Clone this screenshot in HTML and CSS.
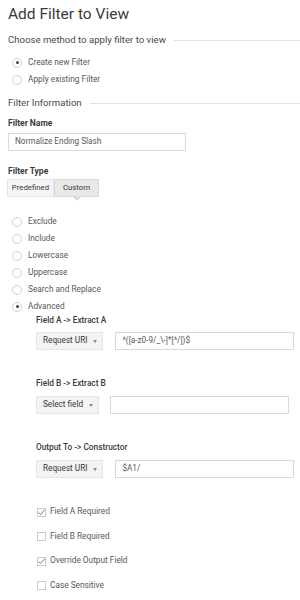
FILE: index.html
```html
<!doctype html>
<html lang="en">
<head>
	<meta charset="utf-8">
	<meta name="viewport" content="width=device-width, initial-scale=1">
	<title>Add Filter to View</title>
	<link rel="stylesheet" href="styles.css">
</head>
<body>

	<main class="page">

		<h1 class="title">Add Filter to View</h1>

		<div class="section-head section-head-first">Choose method to apply filter to view</div>

		<div class="radios radios-method">
			<label class="radio"><span class="radio-dot is-on"></span>Create new Filter</label>
			<label class="radio"><span class="radio-dot"></span>Apply existing Filter</label>
		</div>

		<div class="section-head">Filter Information</div>

		<div class="field-label field-label-name">Filter Name</div>
		<div class="text-input text-input-name">Normalize Ending Slash</div>

		<div class="field-label field-label-type">Filter Type</div>
		<div class="tabs">
			<span class="tab tab-first">Predefined</span>
			<span class="tab tab-active">Custom</span>
		</div>

		<div class="radios radios-type">
			<label class="radio"><span class="radio-dot"></span>Exclude</label>
			<label class="radio"><span class="radio-dot"></span>Include</label>
			<label class="radio"><span class="radio-dot"></span>Lowercase</label>
			<label class="radio"><span class="radio-dot"></span>Uppercase</label>
			<label class="radio"><span class="radio-dot"></span>Search and Replace</label>
			<label class="radio"><span class="radio-dot is-on"></span>Advanced</label>
		</div>

		<div class="advanced">

			<div class="adv-label adv-label-first">Field A -&gt; Extract A</div>
			<div class="adv-row">
				<span class="dropdown">Request URI<span class="caret"></span></span>
				<span class="text-input adv-input">^([a-z0-9/_\-]*[^/])$</span>
			</div>

			<div class="adv-label">Field B -&gt; Extract B</div>
			<div class="adv-row adv-row-b">
				<span class="dropdown">Select field<span class="caret"></span></span>
				<span class="text-input adv-input"></span>
			</div>

			<div class="adv-label">Output To -&gt; Constructor</div>
			<div class="adv-row">
				<span class="dropdown">Request URI<span class="caret"></span></span>
				<span class="text-input adv-input">$A1/</span>
			</div>

			<div class="checks">
				<label class="check"><span class="check-box is-on"></span>Field A Required</label>
				<label class="check"><span class="check-box"></span>Field B Required</label>
				<label class="check"><span class="check-box is-on"></span>Override Output Field</label>
				<label class="check"><span class="check-box"></span>Case Sensitive</label>
			</div>

		</div>

	</main>

</body>
</html>
```

FILE: styles.css
```css
:root {
	--font-family: 'Roboto', 'Liberation Sans', sans-serif;
	--color: #3a3a3a;
	--color-grey: #585858;
	--line: #e3e3e3;
	--border: #d9d9d9;
}

*,
::after,
::before {
	box-sizing: border-box;
	margin: 0;
	padding: 0;
}

body {
	color: var(--color);
	font: 400 8.5px/1.2 var(--font-family);
	background: #fff;
}

.page {
	padding: 4px 0 0 8px;
}

.title {
	height: 20px;
	font-size: 15.5px;
	font-weight: 400;
	line-height: 20px;
	color: #3a3a3a;
}

/* заголовок секции с линией справа */
.section-head {
	display: flex;
	align-items: center;
	gap: 8px;
	height: 14px;
	margin-top: 8px;
	font-size: 9.6px;
	line-height: 14px;
	color: #4a4a4a;
}

.section-head::after {
	content: '';
	flex: 1;
	height: 1px;
	background: var(--line);
}

.section-head-first {
	margin-top: 9px;
}

/* радио */
.radios-method {
	margin-top: 7px;
	padding-left: 4px;
}

.radios-type {
	margin-top: 16px;
	padding-left: 4px;
}

.radio {
	display: flex;
	align-items: center;
	gap: 6px;
	height: 17px;
	color: var(--color-grey);
	font-size: 8.3px;
}

.radio-dot {
	position: relative;
	width: 10px;
	height: 10px;
	border: 1px solid #cfcfcf;
	border-radius: 50%;
	background: #fff;
}

.radio-dot.is-on::after {
	content: '';
	position: absolute;
	top: 2.5px;
	left: 2.5px;
	width: 3px;
	height: 3px;
	border-radius: 50%;
	background: #444;
}

/* поля */
.field-label {
	height: 12px;
	font-size: 8.5px;
	font-weight: 700;
	line-height: 12px;
	color: #3a3a3a;
}

.field-label-name {
	margin-top: 7px;
}

.field-label-type {
	margin-top: 14px;
}

.text-input {
	display: flex;
	align-items: center;
	height: 18px;
	padding-left: 6px;
	border: 1px solid var(--border);
	color: var(--color-grey);
	font-size: 8.2px;
	background: #fff;
}

.text-input-name {
	width: 178px;
	margin-top: 4px;
}

/* табы */
.tabs {
	display: flex;
	margin-top: 2px;
	margin-left: -1px;
}

.tab {
	display: flex;
	align-items: center;
	justify-content: center;
	height: 18px;
	border: 1px solid #e5e5e5;
	font-size: 7.8px;
	color: #3a3a3a;
	background: #f5f5f5;
}

.tab-first {
	width: 47px;
}

.tab-active {
	position: relative;
	width: 45px;
	background: #e8e8e8;
	border-color: #d9d9d9;
}

.tab-active::after {
	content: '';
	position: absolute;
	top: 17px;
	left: 18px;
	border: 4px solid transparent;
	border-top-color: #dadada;
}

/* advanced */
.advanced {
	padding-left: 28px;
}

.adv-label {
	height: 12px;
	margin-top: 27px;
	font-size: 8.3px;
	font-weight: 500;
	line-height: 12px;
	color: #3a3a3a;
}

.adv-label-first {
	height: 10px;
	margin-top: 0;
	line-height: 10px;
}

.adv-row {
	display: flex;
	gap: 12px;
	margin-top: 7px;
}

.adv-row-b {
	gap: 11px;
}

.dropdown {
	display: flex;
	align-items: center;
	height: 18px;
	padding: 0 5px 0 6px;
	border: 1px solid #e5e5e5;
	font-size: 8.2px;
	color: #3a3a3a;
	background: #f3f3f3;
}

.caret {
	margin: 3px 0 0 6px;
	border: 2.5px solid transparent;
	border-top: 3px solid #888;
}

.adv-input {
	width: 179px;
	height: 18px;
}

/* чекбоксы */
.checks {
	margin-top: 22px;
}

.check {
	display: flex;
	align-items: center;
	gap: 4px;
	height: 24.5px;
	padding-left: 1px;
	color: var(--color-grey);
	font-size: 8.3px;
}

.check-box {
	width: 9px;
	height: 9px;
	border: 1px solid #cbcbcb;
	background: #fff;
}

.check-box.is-on {
	background: url('data:image/svg+xml,%3Csvg xmlns="http://www.w3.org/2000/svg" viewBox="0 0 9 9" fill="none"%3E%3Cpath d="M1.5 4.5L3.5 6.5L8 1.5" stroke="%23777" stroke-width="1"/%3E%3C/svg%3E') center/9px 9px no-repeat, #fff;
}
```
